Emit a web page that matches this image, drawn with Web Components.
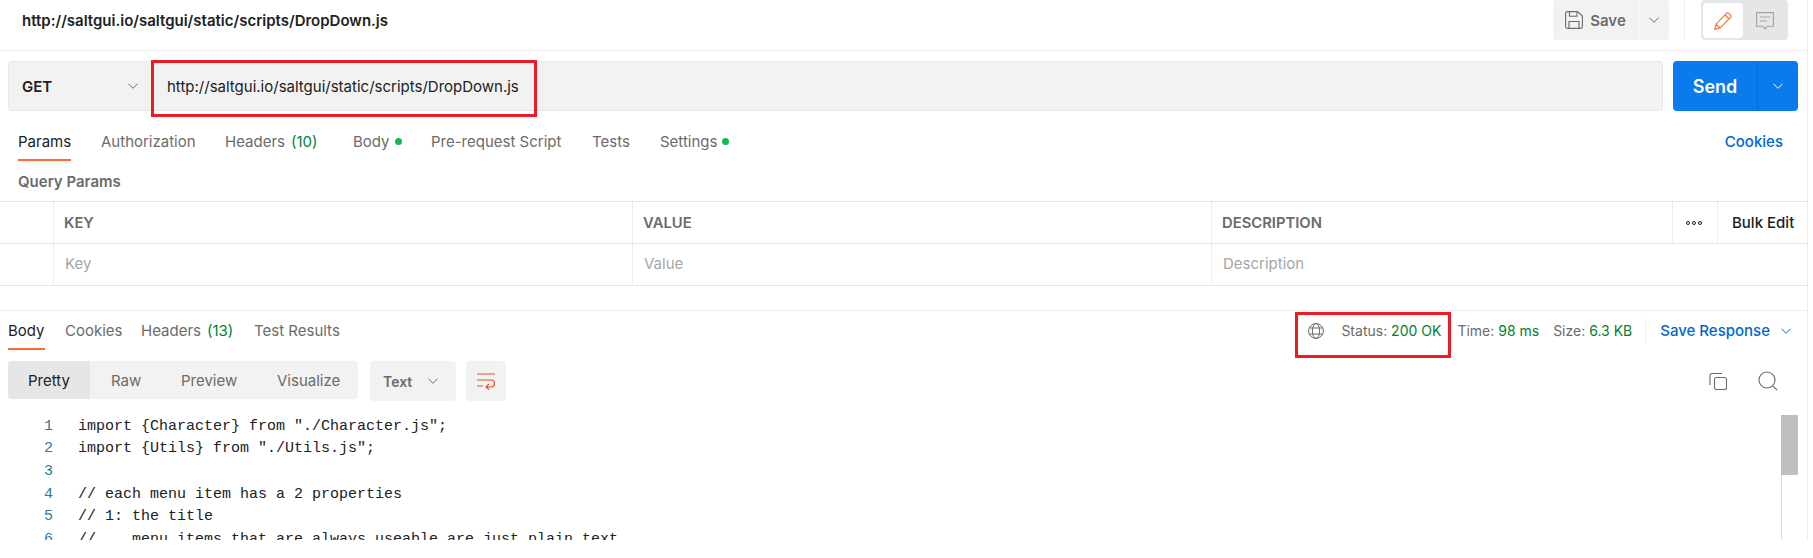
<!DOCTYPE html>
<html>
<head>
<meta charset="utf-8">
<title>Request</title>
<style>
html, body { margin: 0; background: #fff; }
body { font-family: Inter, "Liberation Sans", sans-serif; font-size: 15px; color: #212121; }
</style>
</head>
<body>
<pm-app>
  <pm-titlebar>http://saltgui.io/saltgui/static/scripts/DropDown.js</pm-titlebar>
  <pm-urlbar method="GET" url="http://saltgui.io/saltgui/static/scripts/DropDown.js"></pm-urlbar>
  <pm-tabs style="height:50px; --pad:18px; --tab-top:12px">
    <pm-tab active w="83">Params</pm-tab>
    <pm-tab w="124">Authorization</pm-tab>
    <pm-tab w="128" count="(10)">Headers</pm-tab>
    <pm-tab w="78" dot>Body</pm-tab>
    <pm-tab w="161">Pre-request Script</pm-tab>
    <pm-tab w="68">Tests</pm-tab>
    <pm-tab w="80" dot>Settings</pm-tab>
    <pm-link slot="end">Cookies</pm-link>
  </pm-tabs>
  <pm-params></pm-params>
  <pm-response></pm-response>
</pm-app>

<script>
const CHEVRON = (color, size = 12) => `<svg width="${size}" height="${size}" viewBox="0 0 12 12" fill="none" stroke="${color}" stroke-width="1"><path d="M1.5 3.8 6 8.3l4.5-4.5"/></svg>`;

class PmApp extends HTMLElement {
    constructor() {
        super();
        this.attachShadow({ mode: 'open' });
        this.shadowRoot.innerHTML = `<style>
        :host { display: block; width: 1807px; height: 540px; border-right: 1px solid #ededed; overflow: hidden; position: relative; }
        </style><slot></slot>`;
    }
}

class PmTitlebar extends HTMLElement {
    constructor() {
        super();
        this.attachShadow({ mode: 'open' });
        this.shadowRoot.innerHTML = `<style>
        :host { display: flex; align-items: flex-start; height: 50px; border-bottom: 1px solid #ededed; padding: 0 19px 0 22px; }
        .name { flex: 1; font-weight: 600; font-size: 15px; line-height: 42px; color: #212121; }
        .save { display: flex; gap: 1px; }
        .btn { height: 40px; background: #f2f2f2; display: flex; align-items: center; justify-content: center; color: #6b6b6b; font-weight: 600; font-size: 15px; }
        .main { width: 85px; border-radius: 4px 0 0 4px; gap: 7px; }
        .more { width: 30px; border-radius: 0 4px 4px 0; }
        .sep { width: 1px; height: 40px; background: #ededed; margin: 0 16px 0 15px; }
        .toggle { width: 87px; height: 40px; background: #e6e6e6; border-radius: 4px; box-sizing: border-box; padding: 3px 2px; display: flex; }
        .pane { width: 40px; height: 35px; border-radius: 4px; display: flex; align-items: center; justify-content: center; }
        .pane.on { background: #fff; }
        .pane + .pane { margin-left: 2px; }
        </style>
        <div class="name"><slot></slot></div>
        <div class="save">
          <div class="btn main">
            <svg width="18" height="18" viewBox="0 0 18 18" fill="none" stroke="#6b6b6b" stroke-width="1.1"><path d="M.6 2.5A1.9 1.9 0 0 1 2.500.6h10.300l4.600 4.400v10.500a1.900 1.900 0 0 1-1.900 1.900H2.500a1.900 1.900 0 0 1-1.900-1.900z"/><path d="M4.500.6v4.700h7.500V.6M4 17.400v-6.900h10v6.900"/></svg>
            <span>Save</span>
          </div>
          <div class="btn more">${CHEVRON('#6b6b6b')}</div>
        </div>
        <div class="sep"></div>
        <div class="toggle">
          <div class="pane on">
            <svg width="18" height="18" viewBox="0 0 18 18" fill="none" stroke="#ff6c37" stroke-width="1.200"><path d="M.8 17.200l1.200-5L12.600 1.400a1.600 1.600 0 0 1 2.300 0l1.700 1.700a1.600 1.600 0 0 1 0 2.300L6 16zM2 12.200 6 16M11 3l4 4"/></svg>
          </div>
          <div class="pane">
            <svg width="18" height="18" viewBox="0 0 18 18" fill="none" stroke="#a3a3a3" stroke-width="1.100"><path d="M.6.6h16.800v13.600h-6.200L9 16.800l-2.200-2.600H.6zM4 5h10M4 9h7"/></svg>
          </div>
        </div>`;
    }
}

class PmUrlbar extends HTMLElement {
    constructor() {
        super();
        this.attachShadow({ mode: 'open' });
    }
    connectedCallback() {
        this.shadowRoot.innerHTML = `<style>
        :host { display: flex; height: 50px; padding: 10px 9px 0 8px; gap: 10px; }
        .box { flex: 1; background: #f2f2f2; border: 1px solid #e6e6e6; border-radius: 4px; display: flex; align-items: center; box-sizing: border-box; }
        .method { width: 143px; padding-left: 13px; box-sizing: border-box; display: flex; align-items: center; font-weight: 600; font-size: 15px; color: #212121; }
        .method span { flex: 1; }
        .method svg { margin-right: 13px; }
        .url { font-size: 15px; color: #212121; padding-left: 15px; }
        .send { width: 125px; height: 50px; background: #097bed; border-radius: 4px; display: flex; color: #fff; }
        .label { width: 84px; display: flex; align-items: center; justify-content: center; font-size: 18px; font-weight: 600; border-right: 1px solid #0a6fd4; }
        .arrow { flex: 1; display: flex; align-items: center; justify-content: center; }
        .mark { position: absolute; left: 151px; top: 60px; width: 386px; height: 57px; border: 3px solid #ed1c24; box-sizing: border-box; }
        </style>
        <div class="box">
          <div class="method"><span>${this.getAttribute('method')}</span>${CHEVRON('#6b6b6b')}</div>
          <div class="url">${this.getAttribute('url')}</div>
        </div>
        <div class="send"><div class="label">Send</div><div class="arrow">${CHEVRON('#fff')}</div></div>
        <div class="mark"></div>`;
    }
}

class PmTabs extends HTMLElement {
    constructor() {
        super();
        this.attachShadow({ mode: 'open' });
        this.shadowRoot.innerHTML = `<style>
        :host { display: flex; align-items: stretch; padding-left: var(--pad, 8px); padding-right: 24px; box-sizing: border-box; }
        .tabs { display: flex; flex: 1; }
        .end { display: flex; align-items: center; padding-top: 10px; }
        </style>
        <div class="tabs"><slot></slot></div>
        <div class="end"><slot name="end"></slot></div>`;
    }
}

class PmTab extends HTMLElement {
    constructor() {
        super();
        this.attachShadow({ mode: 'open' });
    }
    connectedCallback() {
        const w = this.getAttribute('w');
        const count = this.getAttribute('count');
        const on = this.hasAttribute('active');
        this.shadowRoot.innerHTML = `<style>
        :host { display: block; width: ${w}px; height: 100%; flex: none; }
        .inner { display: inline-flex; align-items: center; height: 100%; box-sizing: border-box; font-size: 15px; color: ${on ? '#212121' : '#6b6b6b'}; border-bottom: 2px solid ${on ? '#ff6c37' : 'transparent'}; gap: 4px; padding-top: var(--tab-top, 2px); }
        .count { color: #007f31; margin-left: 2px; }
        .dot { width: 7px; height: 7px; border-radius: 50%; background: #0cbb52; margin-left: 1px; }
        </style>
        <div class="inner"><slot></slot>${count ? `<span class="count">${count}</span>` : ''}${this.hasAttribute('dot') ? '<span class="dot"></span>' : ''}</div>`;
    }
}

class PmLink extends HTMLElement {
    constructor() {
        super();
        this.attachShadow({ mode: 'open' });
        this.shadowRoot.innerHTML = `<style>
        :host { display: block; color: #0265d2; font-weight: 500; font-size: 15px; }
        </style><slot></slot>`;
    }
}

class PmParams extends HTMLElement {
    constructor() {
        super();
        this.attachShadow({ mode: 'open' });
        this.shadowRoot.innerHTML = `<style>
        :host { display: block; }
        h4 { margin: 0; height: 40px; line-height: 42px; padding-left: 18px; font-size: 15px; font-weight: 600; color: #6b6b6b; }
        .row { display: grid; grid-template-columns: 53px 579px 579px 461px 45px 90px; height: 42px; border-top: 1px solid #e6e6e6; box-sizing: border-box; }
        .row:last-child { border-bottom: 1px solid #e6e6e6; height: 43px; }
        .cell { border-left: 1px solid #ededed; padding: 0 0 2px 11px; display: flex; align-items: center; font-size: 15px; color: #a6a6a6; }
        .cell:first-child { border-left: none; }
        .head .cell { font-size: 14.800px; font-weight: 600; color: #6b6b6b; padding: 0 0 0 10px; }
        .head .bulk { color: #212121; padding-left: 14px; font-size: 15px; font-weight: 500; }
        .head .dots { padding-left: 13px; gap: 2px; }
        .dots i { width: 4px; height: 4px; border: 1px solid #212121; border-radius: 50%; box-sizing: border-box; display: block; }
        .span { grid-column: span 3; }
        </style>
        <h4>Query Params</h4>
        <div class="row head">
          <div class="cell"></div><div class="cell">KEY</div><div class="cell">VALUE</div><div class="cell">DESCRIPTION</div>
          <div class="cell dots"><i></i><i></i><i></i></div><div class="cell bulk">Bulk Edit</div>
        </div>
        <div class="row">
          <div class="cell"></div><div class="cell">Key</div><div class="cell">Value</div><div class="cell span">Description</div>
        </div>`;
    }
}

class PmResponse extends HTMLElement {
    constructor() {
        super();
        this.attachShadow({ mode: 'open' });
        this.shadowRoot.innerHTML = `<style>
        :host { display: block; margin-top: 24px; border-top: 1px solid #ededed; }
        .top { display: flex; height: 39px; padding-left: 8px; padding-right: 15px; align-items: stretch; }
        .top .tabs { display: flex; flex: 1; }
        .meta { display: flex; align-items: center; font-size: 14px; color: #6b6b6b; position: relative; }
        .meta b { font-weight: 400; color: #007f31; }
        .meta > span { white-space: pre; }
        .globe { margin-right: 17px; }
        .status { margin-right: 16px; }
        .time { margin-right: 14px; }
        .div { width: 1px; height: 24px; background: #ededed; margin: 0 14px 0 13px; }
        .save { color: #0265d2; font-size: 15px; font-weight: 500; margin-right: 10px; }
        .mark { position: absolute; left: 1295px; top: 312px; width: 156px; height: 46px; border: 3px solid #ed1c24; box-sizing: border-box; }
        .tools { display: flex; margin: 11px 0 0 8px; height: 40px; align-items: flex-start; }
        .seg { display: flex; height: 38px; width: 350px; background: #f2f2f2; border-radius: 4px; overflow: hidden; font-size: 15px; color: #6b6b6b; }
        .seg div { display: flex; align-items: center; padding-left: 21px; box-sizing: border-box; }
        .seg .on { background: #e6e6e6; color: #212121; padding-left: 20px; }
        .drop { width: 86px; height: 40px; margin-left: 12px; background: #f2f2f2; border-radius: 4px; display: flex; align-items: center; gap: 15px; padding-left: 13px; box-sizing: border-box; font-size: 14px; font-weight: 600; color: #6b6b6b; }
        .wrap { width: 40px; height: 40px; margin-left: 10px; background: #f2f2f2; border-radius: 4px; display: flex; align-items: center; justify-content: center; }
        .grow { flex: 1; }
        .icon { width: 50px; display: flex; justify-content: center; height: 40px; align-items: center; }
        .body { display: flex; height: 129px; margin-top: 14px; padding-right: 9px; }
        .code { flex: 1; overflow: hidden; height: 129px; box-sizing: border-box; padding-top: .5px; }
        .line { display: flex; height: 22.700px; line-height: 22.700px; font-family: "Liberation Mono", monospace; font-size: 15px; color: #212121; white-space: pre; }
        .num { width: 53px; text-align: right; color: #2b7b9e; margin-right: 25px; }
        .track { width: 17px; border-left: 1px solid #dcdcdc; box-sizing: border-box; height: 129px; }
        .thumb { height: 60px; margin-left: -1px; width: 17px; background: #bfbfbf; }
        </style>
        <div class="top">
          <div class="tabs"><slot></slot></div>
          <div class="meta">
            <svg class="globe" width="16" height="16" viewBox="0 0 16 16" fill="none" stroke="#6b6b6b" stroke-width="1"><circle cx="8" cy="8" r="7.400"/><ellipse cx="8" cy="8" rx="3.600" ry="7.400"/><path d="M1.600 5h12.800M1.600 11h12.800"/></svg>
            <span class="status">Status: <b>200 OK</b></span>
            <span class="time">Time: <b>98 ms</b></span>
            <span>Size: <b>6.3 KB</b></span>
            <div class="div"></div>
            <span class="save">Save Response</span>
            ${CHEVRON('#0265d2')}
          </div>
        </div>
        <div class="mark"></div>
        <div class="tools">
          <div class="seg">
            <div class="on" style="width:82px">Pretty</div>
            <div style="width:70px">Raw</div>
            <div style="width:96px">Preview</div>
            <div style="width:102px">Visualize</div>
          </div>
          <div class="drop"><span>Text</span>${CHEVRON('#6b6b6b')}</div>
          <div class="wrap">
            <svg width="18" height="17" viewBox="0 0 18 17" fill="none" stroke="#d9552b" stroke-width="1.200"><path d="M0 1h18M0 7h14a3.500 3.500 0 0 1 0 7H9.500M12 11 9 14l3 2.600M0 13h6"/></svg>
          </div>
          <div class="grow"></div>
          <div class="icon"><svg width="18" height="18" viewBox="0 0 18 18" fill="none" stroke="#6b6b6b" stroke-width="1.100"><rect x="5.500" y="5.500" width="12" height="12" rx="2"/><path d="M13 1.500H3A2 2 0 0 0 1 3.500V13"/></svg></div>
          <div class="icon" style="margin-right:14px"><svg width="20" height="20" viewBox="0 0 20 20" fill="none" stroke="#6b6b6b" stroke-width="1.100"><circle cx="9" cy="9" r="8"/><path d="M14.800 14.800 19 19"/></svg></div>
        </div>
        <div class="body">
          <div class="code" id="code"></div>
          <div class="track"><div class="thumb"></div></div>
        </div>`;
        const lines = [
            'import {Character} from "./Character.js";',
            'import {Utils} from "./Utils.js";',
            '',
            '// each menu item has a 2 properties',
            '// 1: the title',
            '//    menu items that are always useable are just plain text'
        ];
        const code = this.shadowRoot.getElementById('code');
        lines.forEach((text, i) => {
            const line = document.createElement('div');
            line.className = 'line';
            const num = document.createElement('span');
            num.className = 'num';
            num.textContent = i + 1;
            const src = document.createElement('span');
            src.textContent = text;
            line.append(num, src);
            code.appendChild(line);
        });
    }
    connectedCallback() {
        // the response tabs live inside this element, so it builds its own
        if (this.children.length) return;
        this.innerHTML = `<pm-tab active w="57">Body</pm-tab><pm-tab w="76">Cookies</pm-tab><pm-tab w="113" count="(13)">Headers</pm-tab><pm-tab w="90">Test Results</pm-tab>`;
    }
}

customElements.define('pm-app', PmApp);
customElements.define('pm-titlebar', PmTitlebar);
customElements.define('pm-urlbar', PmUrlbar);
customElements.define('pm-tabs', PmTabs);
customElements.define('pm-tab', PmTab);
customElements.define('pm-link', PmLink);
customElements.define('pm-params', PmParams);
customElements.define('pm-response', PmResponse);
</script>
</body>
</html>
